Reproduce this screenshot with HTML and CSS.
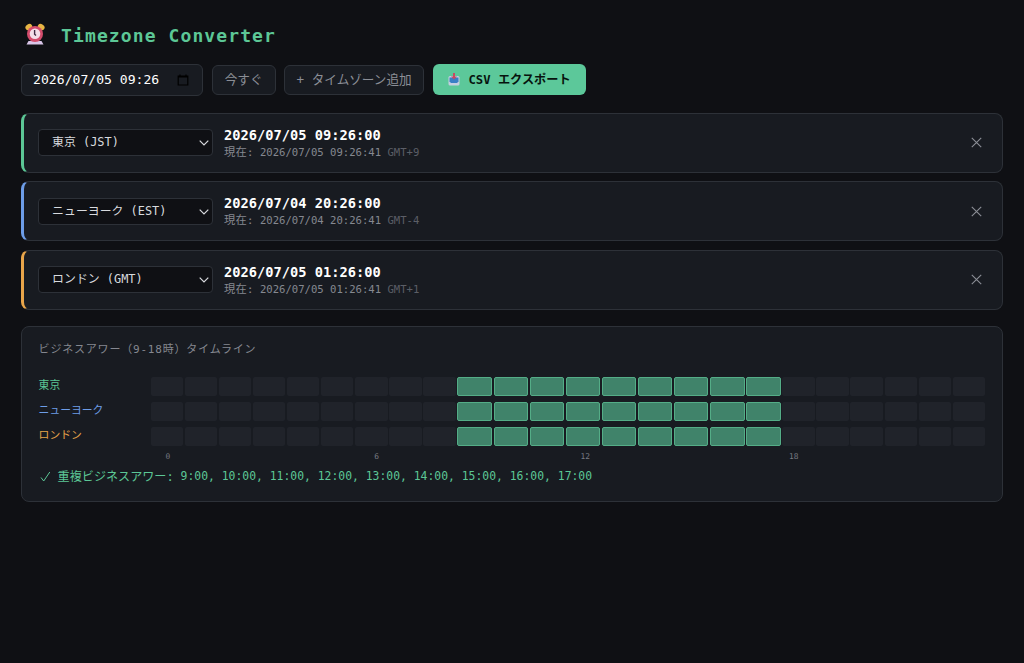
FILE: index.html
```html
<!DOCTYPE html>
<html lang="ja">
<head>
    <meta charset="UTF-8">
    <meta name="viewport" content="width=device-width, initial-scale=1.0">
    <title>Timezone Converter</title>
    <link rel="stylesheet" href="styles.css">
</head>
<body>
    <h1>
        <svg class="clock" viewBox="0 0 20 22">
            <path d="M3.5 18h13l2 3.5h-17z" fill="#d9c5e8"/>
            <ellipse cx="3.8" cy="4" rx="3.6" ry="2.8" transform="rotate(-35 3.8 4)" fill="#e8b544"/>
            <ellipse cx="16.2" cy="4" rx="3.6" ry="2.8" transform="rotate(35 16.2 4)" fill="#e8b544"/>
            <circle cx="10" cy="11" r="8" fill="#d34c6c"/>
            <circle cx="10" cy="10.8" r="5.3" fill="#f4dfe9"/>
            <path d="M9.6 7v4.2l1.4 1.4" fill="none" stroke="#402c43" stroke-width="1.4"/>
        </svg>
        <span>Timezone Converter</span>
    </h1>

    <div class="controls">
        <div class="datetime">
            <span>2026/07/05 09:26</span>
            <svg class="calendar" viewBox="0 0 12 12"><path d="M1.2 2h9.6v9H1.2zM1.2 3h9.6M3 .5V2M9 .5V2" fill="none" stroke="#000" stroke-width="1.2"/></svg>
        </div>
        <button class="btn">今すぐ</button>
        <button class="btn btn-add">+ タイムゾーン追加</button>
        <button class="btn btn-export">
            <svg class="inbox" viewBox="0 0 12 14">
                <rect x=".5" y="4" width="11" height="9.5" rx="1.5" fill="#c4cfe0"/>
                <path d="M1.5 5.5h9v4L9 11H3L1.5 9.5z" fill="#397fc5"/>
                <path d="M5 1h2v3.5h2L6 7.5l-3-3h2z" fill="#c94a62"/>
            </svg>
            <span>CSV エクスポート</span>
        </button>
    </div>

    <div class="zones">
        <div class="zone tokyo">
            <div class="picker">
                <select><option>東京 (JST)</option></select>
                <svg viewBox="0 0 10 6"><path d="M.7.7L5 5 9.3.7"/></svg>
            </div>
            <div class="info">
                <div class="time">2026/07/05 09:26:00</div>
                <div class="now"><span class="now-label">現在:</span> 2026/07/05 09:26:41 <span class="offset">GMT+9</span></div>
            </div>
            <button class="remove"><svg viewBox="0 0 10 10"><path d="M.7.7l8.6 8.6M9.3.7L.7 9.3"/></svg></button>
        </div>
        <div class="zone newyork">
            <div class="picker">
                <select><option>ニューヨーク (EST)</option></select>
                <svg viewBox="0 0 10 6"><path d="M.7.7L5 5 9.3.7"/></svg>
            </div>
            <div class="info">
                <div class="time">2026/07/04 20:26:00</div>
                <div class="now"><span class="now-label">現在:</span> 2026/07/04 20:26:41 <span class="offset">GMT-4</span></div>
            </div>
            <button class="remove"><svg viewBox="0 0 10 10"><path d="M.7.7l8.6 8.6M9.3.7L.7 9.3"/></svg></button>
        </div>
        <div class="zone london">
            <div class="picker">
                <select><option>ロンドン (GMT)</option></select>
                <svg viewBox="0 0 10 6"><path d="M.7.7L5 5 9.3.7"/></svg>
            </div>
            <div class="info">
                <div class="time">2026/07/05 01:26:00</div>
                <div class="now"><span class="now-label">現在:</span> 2026/07/05 01:26:41 <span class="offset">GMT+1</span></div>
            </div>
            <button class="remove"><svg viewBox="0 0 10 10"><path d="M.7.7l8.6 8.6M9.3.7L.7 9.3"/></svg></button>
        </div>
    </div>

    <div class="timeline">
        <h2>ビジネスアワー（9-18時）タイムライン</h2>
        <div class="row tokyo"><span class="label">東京</span><div class="hours"></div></div>
        <div class="row newyork"><span class="label">ニューヨーク</span><div class="hours"></div></div>
        <div class="row london"><span class="label">ロンドン</span><div class="hours"></div></div>
        <div class="axis"></div>
        <div class="overlap"><svg class="check" viewBox="0 0 11 11"><path d="M1 6.5l2.7 3.5L9.8 1"/></svg><span class="overlap-label">重複ビジネスアワー:</span> 9:00, 10:00, 11:00, 12:00, 13:00, 14:00, 15:00, 16:00, 17:00</div>
    </div>

    <script>
        // 24時間分のセル
        document.querySelectorAll(".hours").forEach(row => {
            for (let h = 0; h < 24; h++) {
                let cell = document.createElement("div");
                cell.className = h >= 9 && h < 18 ? "hour business" : "hour";
                row.appendChild(cell);
            }
        });

        // 6時間ごとの目盛り
        let axis = document.querySelector(".axis");
        for (let h = 0; h < 24; h++) {
            let mark = document.createElement("span");
            mark.textContent = h % 6 === 0 ? h : "";
            axis.appendChild(mark);
        }
    </script>
</body>
</html>
```
FILE: styles.css
```css
* {
    box-sizing: border-box;
}
body {
    margin: 0;
    padding: 20.5px 21px 20px 20.6px;
    background: #0f1014;
    color: #e4e6eb;
    font-family: "DejaVu Sans Mono", "Noto Sans CJK JP", monospace;
    font-size: 12px;
}
h1 {
    display: flex;
    align-items: center;
    gap: 16.5px;
    height: 29px;
    margin: 0 0 14px;
    padding-left: 4px;
    color: #5cc796;
    font-size: 18px;
    letter-spacing: 1.1px;
}
.clock {
    width: 20px;
    height: 22px;
    margin-top: -2px;
}
.controls {
    display: flex;
    align-items: center;
    gap: 8.5px;
    height: 32px;
    margin-bottom: 17px;
}
.datetime {
    display: flex;
    align-items: center;
    justify-content: space-between;
    width: 182.5px;
    height: 32px;
    padding: 0 13px 0 11.5px;
    border: 1px solid #2d3138;
    border-radius: 6px;
    background: #181b21;
    color: #fff;
    font-size: 13.1px;
}
.calendar {
    width: 12px;
    height: 12px;
}
.btn {
    width: 64px;
    height: 30px;
    padding: 0 0 3px;
    border: 1px solid #2d3138;
    border-radius: 6px;
    background: #181b21;
    color: #8b8e96;
    font-family: inherit;
    font-size: 12.6px;
    white-space: nowrap;
}
.btn-add {
    width: 140px;
}
.btn-export {
    display: flex;
    align-items: center;
    justify-content: center;
    gap: 9px;
    width: 153px;
    height: 31px;
    padding: 0 0 1px;
    border: none;
    background: #5cc89a;
    color: #07130e;
    font-size: 12.2px;
    font-weight: bold;
}
.inbox {
    width: 12px;
    height: 14px;
}
.zones {
    display: flex;
    flex-direction: column;
    gap: 8.5px;
    margin-bottom: 16.5px;
}
.zone {
    display: flex;
    align-items: center;
    gap: 11px;
    height: 60px;
    padding: 0 20px 0 14.5px;
    border: 1px solid #2d3138;
    border-left: 3px solid;
    border-radius: 8px;
    background: #181b21;
}
.zone.tokyo {
    border-left-color: #5cc796;
}
.zone.newyork {
    border-left-color: #6d9de8;
}
.zone.london {
    border-left-color: #e8a54a;
}
.picker {
    position: relative;
    height: 27px;
}
.picker svg {
    position: absolute;
    top: 11px;
    right: 4px;
    width: 10px;
    height: 6px;
    fill: none;
    stroke: #d8dade;
    stroke-width: 1.2;
    pointer-events: none;
}
select {
    appearance: none;
    width: 175px;
    height: 27px;
    padding: 0 0 1px 13px;
    border: 1px solid #2d3138;
    border-radius: 4px;
    background: #0f1014;
    color: #d8dade;
    font-family: inherit;
    font-size: 11.9px;
}
.info {
    flex: 1;
}
.time {
    height: 19px;
    color: #fff;
    font-size: 13.7px;
    font-weight: bold;
    line-height: 20px;
}
.now {
    height: 17px;
    color: #858890;
    font-size: 10.6px;
    line-height: 17px;
}
.now-label {
    font-size: 11.3px;
}
.offset {
    color: #5b5e66;
}
.remove {
    display: flex;
    padding: 0;
    border: none;
    background: none;
}
.remove svg {
    width: 11px;
    height: 11px;
    fill: none;
    stroke: #8b8e96;
    stroke-width: 1;
}
.timeline {
    height: 176px;
    padding: 14px 17px;
    border: 1px solid #2d3138;
    border-radius: 8px;
    background: #181b21;
}
h2 {
    height: 18px;
    margin: 0 0 17.5px;
    color: #858890;
    font-size: 11px;
    font-weight: normal;
    letter-spacing: 0.8px;
    line-height: 18px;
}
.row {
    display: flex;
    align-items: center;
    height: 19px;
    margin-bottom: 6px;
}
.label {
    width: 112px;
    padding-bottom: 4px;
    font-size: 10.8px;
}
.row.tokyo {
    color: #5cc796;
}
.row.newyork {
    color: #6d9de8;
}
.row.london {
    color: #e8a54a;
}
.hours {
    display: flex;
    flex: 1;
    gap: 1.7px;
}
.hour {
    flex: 1;
    height: 19px;
    border-radius: 2px;
    background: #20232a;
}
.hour.business {
    border: 1px solid #54ad87;
    background: #40836a;
}
.axis {
    display: flex;
    height: 12px;
    margin: -2px 0 5.5px 112px;
    color: #777a82;
    font-size: 7.9px;
    line-height: 14px;
}
.axis span {
    flex: 1;
    text-align: center;
}
.overlap {
    display: flex;
    align-items: center;
    height: 18px;
    color: #5cc796;
    font-size: 11.4px;
    white-space: pre;
}
.overlap-label {
    padding-bottom: 2px;
    font-size: 12.1px;
}
.check {
    width: 11px;
    height: 11px;
    margin: 0 7px 0 1px;
    fill: none;
    stroke: #5cc796;
}
```
